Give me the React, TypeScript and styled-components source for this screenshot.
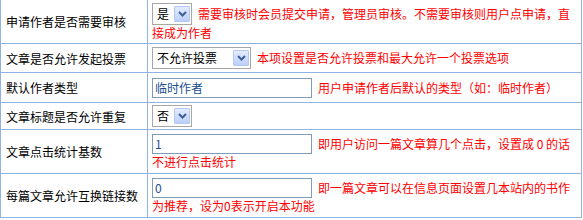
import React from 'react';
import styled, { createGlobalStyle } from 'styled-components';

const GlobalStyle = createGlobalStyle`
  body {
    margin: 0;
    background: #ffffff;
    font-family: "Noto Sans CJK SC", "DejaVu Sans", sans-serif;
    font-size: 12px;
  }
`

const LINE = '#8fb4e3'

const SettingsTable = styled.div`
    width: 582px;
    box-sizing: border-box;
    border-left: 1px solid ${LINE};
    border-right: 1px solid ${LINE};
`

const Row = styled.div<{ height: number }>`
    display: flex;
    height: ${p => p.height}px;
    box-sizing: border-box;
    border-bottom: 1px solid ${LINE};
`

const LabelCell = styled.div`
    width: 147px;
    flex-shrink: 0;
    box-sizing: border-box;
    border-right: 1px solid ${LINE};
    padding-left: 5px;
    display: flex;
    align-items: center;
    color: #000000;
    font-size: 12px;
`

const ValueCell = styled.div`
    flex: 1;
    display: flex;
    flex-direction: column;
    justify-content: center;
    padding: 0 4px;
    min-width: 0;
`

const Flow = styled.div`
    line-height: 14px;
    font-size: 12px;
`

const Hint = styled.span`
    color: #ff0000;
    margin-left: 6px;
    vertical-align: middle;
`

const SelectBox = styled.span<{ width: number }>`
    display: inline-flex;
    align-items: center;
    justify-content: space-between;
    width: ${p => p.width}px;
    height: 22px;
    box-sizing: border-box;
    border: 1px solid #a7a7a7;
    padding: 0 1px 0 4px;
    background: #ffffff;
    color: #000000;
    vertical-align: middle;
    font-size: 12px;
`

const ArrowButton = styled.span`
    display: inline-flex;
    align-items: center;
    justify-content: center;
    width: 16px;
    height: 16px;
    box-sizing: border-box;
    border: 1px solid #b3c8f2;
    border-radius: 1px;
    background: linear-gradient(#e3ecfe, #bccff8);
`

const TextBox = styled.input`
    width: 160px;
    height: 20px;
    box-sizing: border-box;
    border: 1px solid #7f9db9;
    padding: 0 2px;
    margin: 0;
    font-family: "Noto Sans CJK SC", "DejaVu Sans", sans-serif;
    font-size: 12px;
    color: #1b4f8c;
    background: #ffffff;
    vertical-align: middle;
    outline: none;
`

interface SettingRow {
    label: string,
    height: number,
    control: React.ReactNode,
    hint: string
}

function Chevron() {
    return (
        <svg width="9" height="6" viewBox="0 0 9 6">
            <path d="M1 1 L4.5 4.5 L8 1" fill="none" stroke="#3f5f99" strokeWidth="2" />
        </svg>
    )
}

function FakeSelect(props: { value: string, width: number }) {
    return (
        <SelectBox width={props.width}>
            <span>{props.value}</span>
            <ArrowButton>
                <Chevron />
            </ArrowButton>
        </SelectBox>
    )
}

const rows: SettingRow[] = [
    {
        label: '申请作者是否需要审核',
        height: 44,
        control: <FakeSelect value="是" width={40} />,
        hint: '需要审核时会员提交申请，管理员审核。不需要审核则用户点申请，直接成为作者'
    },
    {
        label: '文章是否允许发起投票',
        height: 29,
        control: <FakeSelect value="不允许投票" width={99} />,
        hint: '本项设置是否允许投票和最大允许一个投票选项'
    },
    {
        label: '默认作者类型',
        height: 30,
        control: <TextBox defaultValue="临时作者" readOnly />,
        hint: '用户申请作者后默认的类型（如：临时作者）'
    },
    {
        label: '文章标题是否允许重复',
        height: 27,
        control: <FakeSelect value="否" width={40} />,
        hint: ''
    },
    {
        label: '文章点击统计基数',
        height: 44,
        control: <TextBox defaultValue="1" readOnly />,
        hint: '即用户访问一篇文章算几个点击，设置成 0 的话不进行点击统计'
    },
    {
        label: '每篇文章允许互换链接数',
        height: 44,
        control: <TextBox defaultValue="0" readOnly />,
        hint: '即一篇文章可以在信息页面设置几本站内的书作为推荐，设为0表示开启本功能'
    }
]

export default function App() {
    return (
        <>
            <GlobalStyle />
            <SettingsTable>
                {rows.map((row) => (
                    <Row key={row.label} height={row.height}>
                        <LabelCell>{row.label}</LabelCell>
                        <ValueCell>
                            <Flow>
                                {row.control}
                                {row.hint && <Hint>{row.hint}</Hint>}
                            </Flow>
                        </ValueCell>
                    </Row>
                ))}
            </SettingsTable>
        </>
    )
}
